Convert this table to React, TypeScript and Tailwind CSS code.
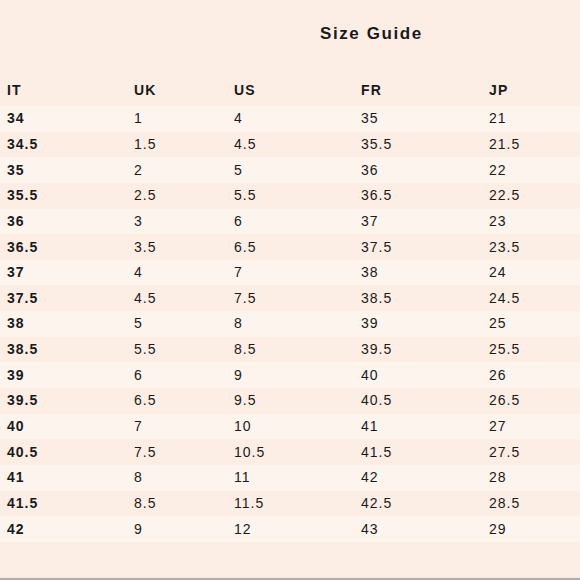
const rows = [
  ["34", "1", "4", "35", "21"],
  ["34.5", "1.5", "4.5", "35.5", "21.5"],
  ["35", "2", "5", "36", "22"],
  ["35.5", "2.5", "5.5", "36.5", "22.5"],
  ["36", "3", "6", "37", "23"],
  ["36.5", "3.5", "6.5", "37.5", "23.5"],
  ["37", "4", "7", "38", "24"],
  ["37.5", "4.5", "7.5", "38.5", "24.5"],
  ["38", "5", "8", "39", "25"],
  ["38.5", "5.5", "8.5", "39.5", "25.5"],
  ["39", "6", "9", "40", "26"],
  ["39.5", "6.5", "9.5", "40.5", "26.5"],
  ["40", "7", "10", "41", "27"],
  ["40.5", "7.5", "10.5", "41.5", "27.5"],
  ["41", "8", "11", "42", "28"],
  ["41.5", "8.5", "11.5", "42.5", "28.5"],
  ["42", "9", "12", "43", "29"],
];

const headers = ["IT", "UK", "US", "FR", "JP"];
// column widths measured off the original layout
const colW = ["w-[127px]", "w-[100px]", "w-[127px]", "w-[128px]", "w-[91px]"];

export default function App() {
  return (
    <div className="flex h-[580px] w-[580px] flex-col overflow-hidden bg-[#fdeee5] font-['Liberation_Sans',Arial,sans-serif] text-[#1a1a1a]">
      <h1 className="pt-[23px] pl-[320px] text-[17px] font-bold leading-[22px] tracking-[1.6px]">
        Size Guide
      </h1>

      <div className="mt-[33px] flex h-[25px] items-center pl-[7px] text-[14px] font-bold tracking-[1.2px]">
        {headers.map((h, i) => (
          <div key={h} className={colW[i]}>
            {h}
          </div>
        ))}
      </div>

      <div className="mt-[3px] flex flex-col">
        {rows.map((r, ri) => (
          <div
            key={r[0]}
            className={`flex h-[25.65px] items-center pl-[7px] text-[14px] tracking-[1px] ${
              ri % 2 === 0 ? "bg-[#fdf4ee]" : "bg-[#fdeee5]"
            }`}
          >
            {r.map((c, ci) => (
              <div key={ci} className={`${colW[ci]} ${ci === 0 ? "font-bold" : ""}`}>
                {c}
              </div>
            ))}
          </div>
        ))}
      </div>

      <div className="mt-auto h-px bg-[#f7ebe3]" />
      <div className="h-[2px] bg-[#b3aca6]" />
    </div>
  );
}
